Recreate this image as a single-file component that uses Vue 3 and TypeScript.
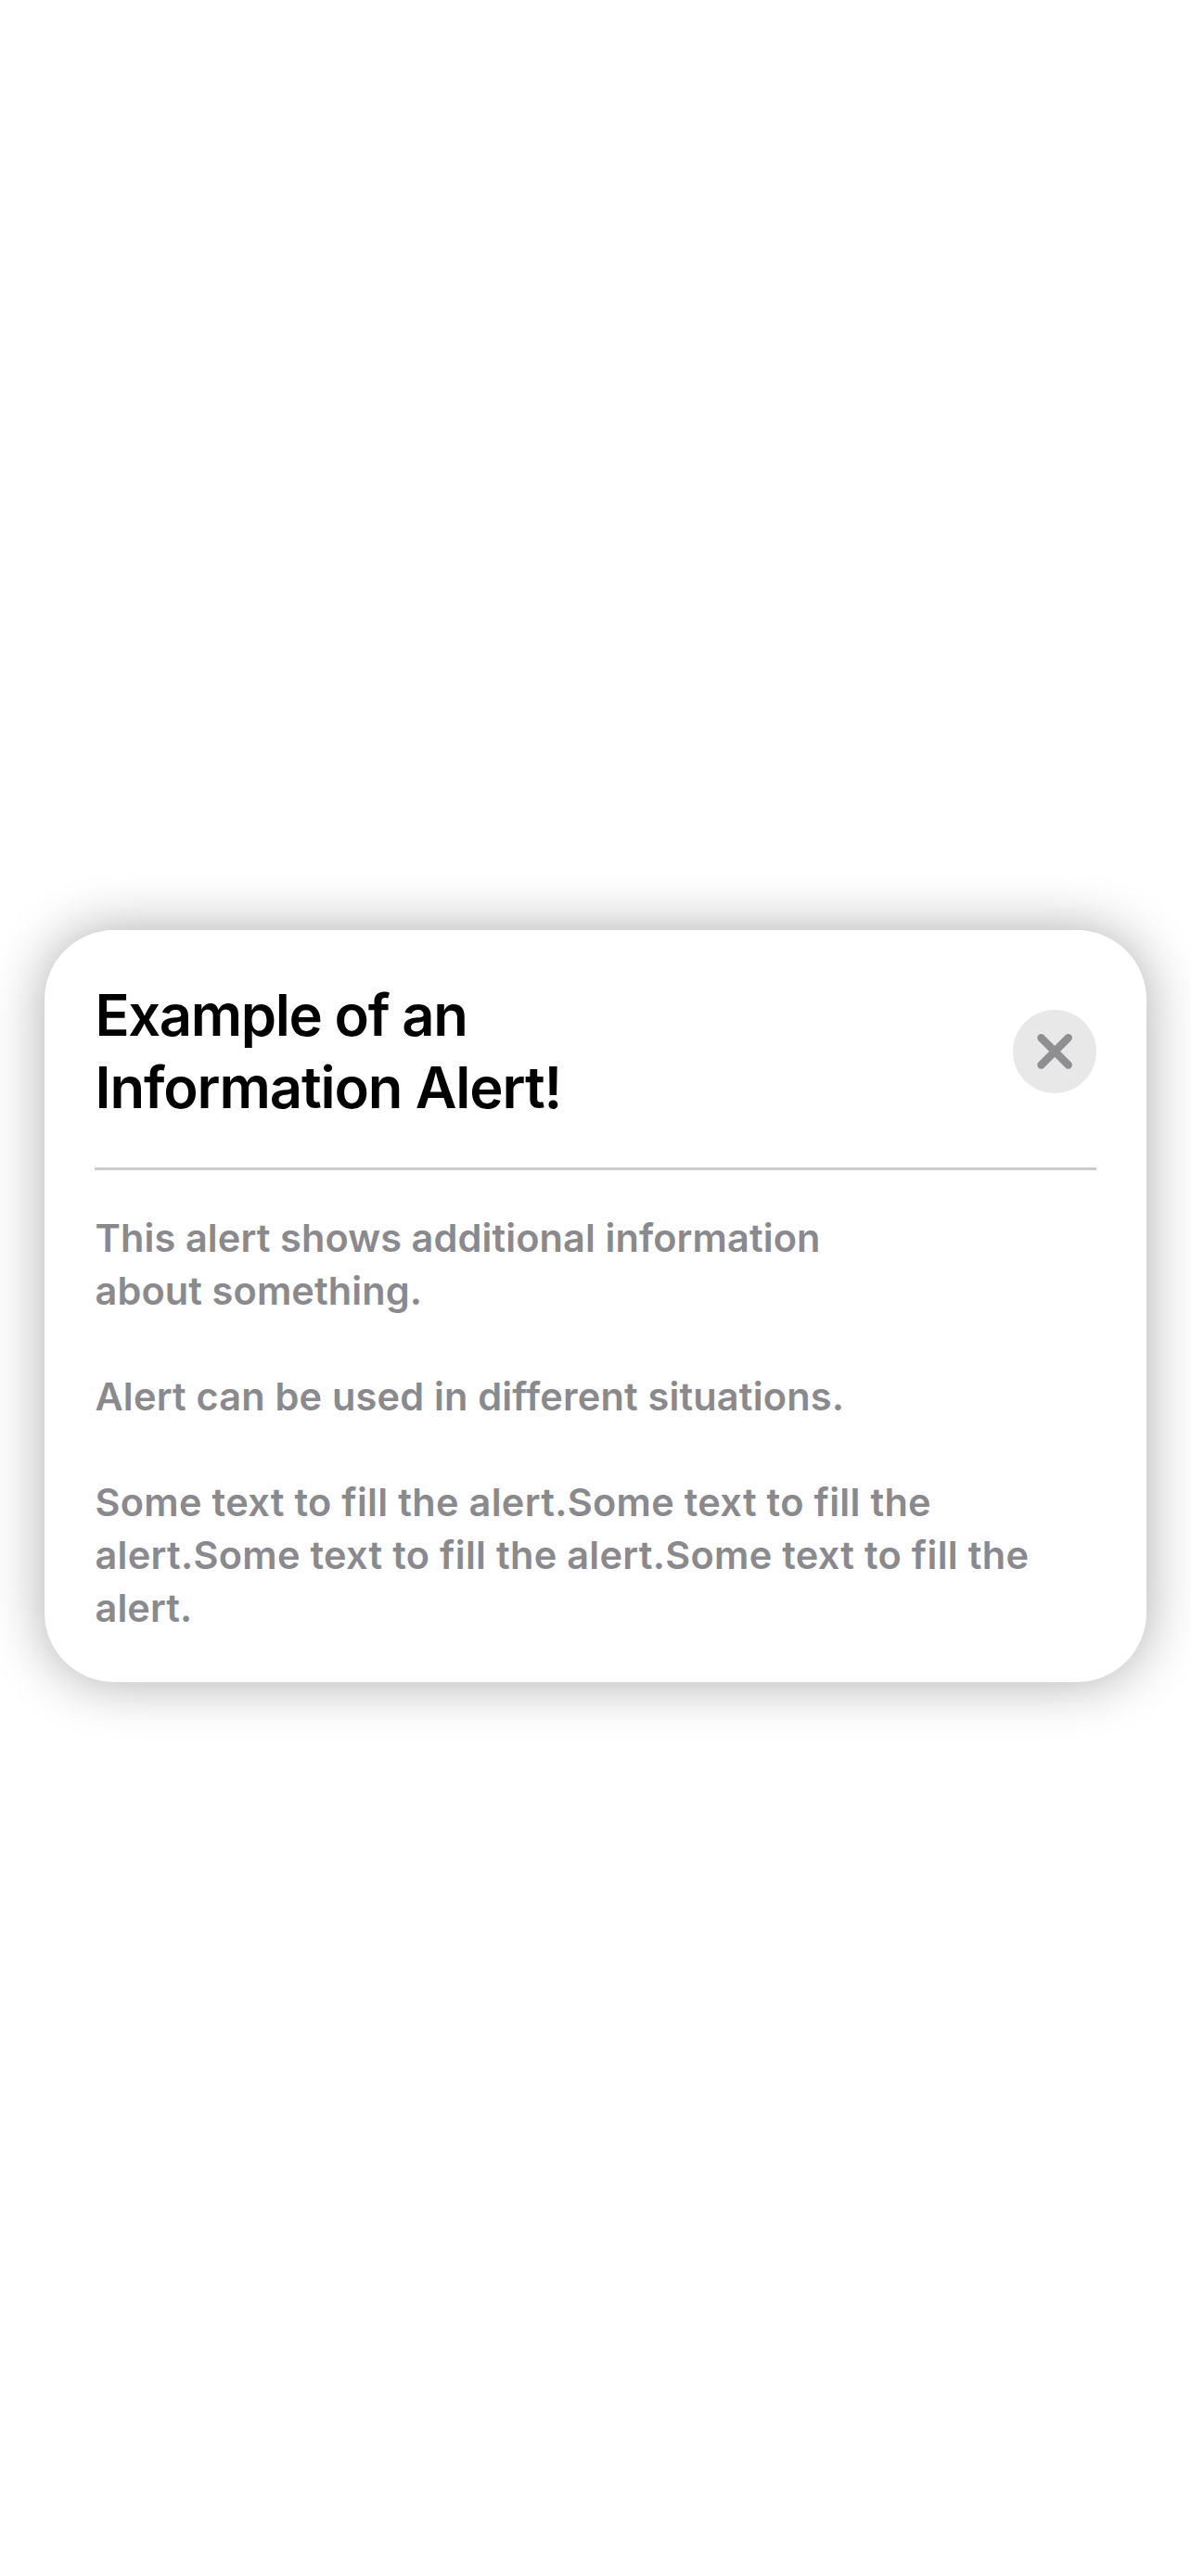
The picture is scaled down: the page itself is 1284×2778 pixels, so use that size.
<script setup lang="ts">
import { ref } from 'vue'

interface Line {
  text: string
  tracking: number
}

const open = ref(true)

const title: Line[] = [
  { text: 'Example of an', tracking: -1.38 },
  { text: 'Information Alert!', tracking: -1.12 },
]

const paragraphs: Line[][] = [
  [
    { text: 'This alert shows additional information', tracking: 0.1 },
    { text: 'about something.', tracking: 0.1 },
  ],
  [{ text: 'Alert can be used in different situations.', tracking: 0.18 }],
  [
    { text: 'Some text to fill the alert.Some text to fill the', tracking: 0.3 },
    { text: 'alert.Some text to fill the alert.Some text to fill the', tracking: 0.284 },
    { text: 'alert.', tracking: 0.06 },
  ],
]
</script>

<template>
  <main class="screen">
    <section v-if="open" class="alert" role="alertdialog" aria-labelledby="alert-title">
      <header class="header">
        <h1 id="alert-title" class="title">
          <span
            v-for="line in title"
            :key="line.text"
            class="line"
            :style="{ letterSpacing: `${line.tracking}px` }"
          >{{ line.text }}</span>
        </h1>
        <button class="close" type="button" aria-label="Close" @click="open = false">
          <svg viewBox="0 0 90 90" width="90" height="90" aria-hidden="true">
            <path d="M30.5 30.3 59.7 59.5M59.7 30.3 30.5 59.5" />
          </svg>
        </button>
      </header>
      <hr class="divider" />
      <div class="body">
        <p v-for="(lines, i) in paragraphs" :key="i" class="paragraph">
          <span
            v-for="line in lines"
            :key="line.text"
            class="line"
            :style="{ letterSpacing: `${line.tracking}px` }"
          >{{ line.text }}</span>
        </p>
      </div>
    </section>
  </main>
</template>

<style>
body {
  margin: 0;
  background: #fff;
}
</style>

<style scoped>
.screen {
  box-sizing: border-box;
  height: 2778px;
  padding: 1003px 48px 0;
  overflow: hidden;
  background: #fff;
  font-family: Inter, 'Liberation Sans', sans-serif;
  font-weight: 600;
}

.alert {
  padding: 53px 54px 51px;
  border-radius: 75px;
  background: #fff;
  box-shadow: 0 0 60px rgba(0, 0, 0, 0.33);
}

.header {
  display: flex;
  align-items: center;
  justify-content: space-between;
}

.title {
  margin: 0;
  padding-left: 0.5px;
  color: #000;
  font-size: 61.5px;
  font-weight: 600;
  line-height: 78px;
}

.line {
  display: block;
  white-space: nowrap;
}

.close {
  width: 90px;
  height: 90px;
  padding: 0;
  border: 0;
  border-radius: 50%;
  background: #e8e8e8;
}

.close svg {
  display: block;
}

.close path {
  fill: none;
  stroke: #8e8e93;
  stroke-width: 8.4;
  stroke-linecap: round;
}

.divider {
  height: 3px;
  margin: 47px 0 45px;
  border: 0;
  background: #cbcbcb;
}

.body {
  display: flex;
  flex-direction: column;
  gap: 57px;
  padding-left: 0.5px;
  color: #8a8a8e;
  font-size: 41.5px;
  line-height: 57px;
}

.paragraph {
  margin: 0;
}
</style>
